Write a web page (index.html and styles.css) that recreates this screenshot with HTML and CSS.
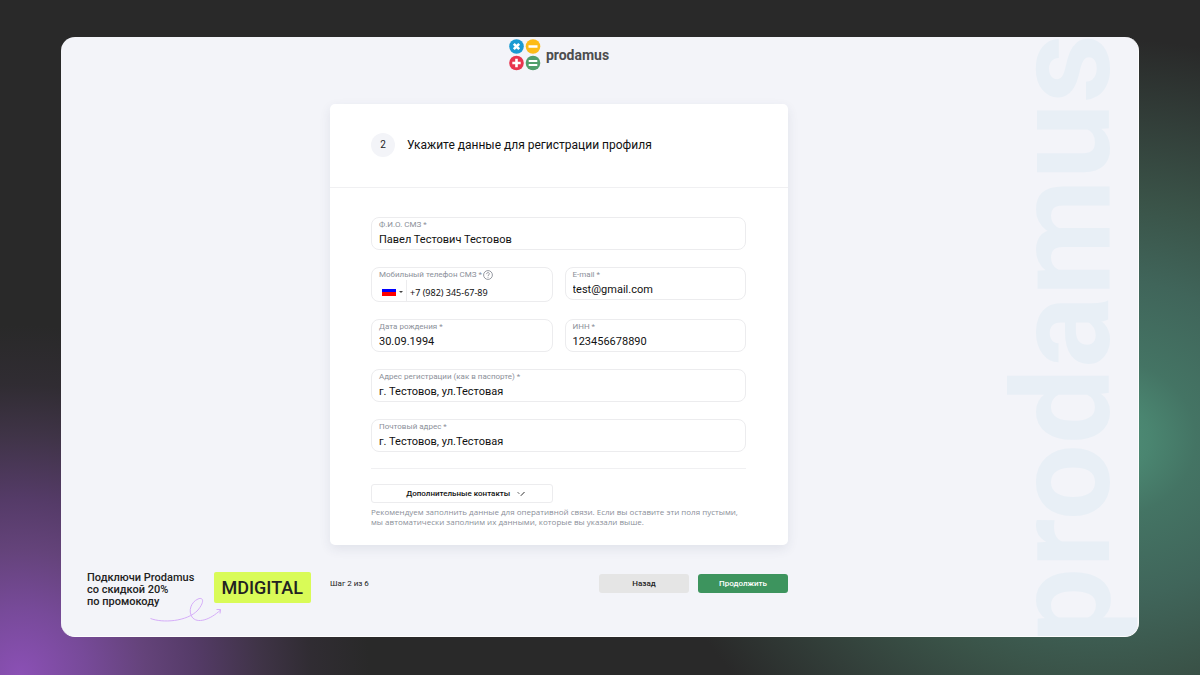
FILE: index.html
```html
<!DOCTYPE html>
<html lang="ru">
<head>
  <meta charset="UTF-8" />
  <title>Prodamus</title>
  <meta name="viewport" content="width=device-width, initial-scale=1" />
  <link rel="stylesheet" href="styles.css">
</head>
<body>
  <div class="window">
    <div class="watermark" aria-hidden="true">prodamus</div>

    <header class="logo">
      <svg class="logo-icon" viewBox="0 0 32 32" aria-hidden="true">
        <circle cx="7.5" cy="7.5" r="7.3" fill="#1b9ad2"/>
        <circle cx="24" cy="7.5" r="7.3" fill="#fdbb17"/>
        <circle cx="7.5" cy="24" r="7.3" fill="#e8344e"/>
        <circle cx="24" cy="24" r="7.3" fill="#519e6b"/>
        <g stroke="#fff" stroke-width="2.6" fill="none">
          <path d="M4.8 4.8l5.4 5.4M10.2 4.8l-5.4 5.4"/>
          <path d="M19.5 7.5h9"/>
          <path d="M7.5 19.8v8.4M3.3 24h8.4"/>
          <path d="M19.7 22h8.6M19.7 26h8.6" stroke-width="2"/>
        </g>
      </svg>
      <span class="logo-text">prodamus</span>
    </header>

    <form class="card" id="profile">
      <div class="card-head">
        <span class="step">2</span>
        <h1>Укажите данные для регистрации профиля</h1>
      </div>
      <div class="card-body">
        <div class="fields">
          <div class="field wide">
            <label for="name">Ф.И.О. СМЗ *</label>
            <input id="name" type="text" value="Павел Тестович Тестовов">
          </div>
          <div class="field phone">
            <div class="label-row">
              <label for="phone">Мобильный телефон СМЗ *</label>
              <button class="help" type="button" aria-label="Подсказка">
                <svg viewBox="0 0 10 10" fill="none" stroke="#8b8f99" stroke-width="0.9">
                  <circle cx="5" cy="5" r="4.4"/>
                  <path d="M3.6 4.1c0-2 2.8-2 2.8-.2 0 1-1.4 1-1.4 2.1M5 6.8v.9"/>
                </svg>
              </button>
            </div>
            <div class="phone-row">
              <button class="country" type="button" aria-label="Россия">
                <span class="flag"></span>
                <span class="caret"></span>
              </button>
              <input id="phone" type="tel" value="+7 (982) 345-67-89">
            </div>
          </div>
          <div class="field">
            <label for="email">E-mail *</label>
            <input id="email" type="email" value="test@gmail.com">
          </div>
          <div class="field">
            <label for="birth">Дата рождения *</label>
            <input id="birth" type="text" value="30.09.1994">
          </div>
          <div class="field">
            <label for="inn">ИНН *</label>
            <input id="inn" type="text" value="123456678890">
          </div>
          <div class="field wide">
            <label for="address">Адрес регистрации (как в паспорте) *</label>
            <input id="address" type="text" value="г. Тестовов, ул.Тестовая">
          </div>
          <div class="field wide">
            <label for="post">Почтовый адрес *</label>
            <input id="post" type="text" value="г. Тестовов, ул.Тестовая">
          </div>
        </div>
        <div class="extra">
          <button class="more" type="button">
            Дополнительные контакты
            <svg viewBox="0 0 8 6" fill="none" stroke="#333"><path d="M.5 1l2 2" stroke-width=".7"/><path d="M3.8 4.8L7.5 1"/></svg>
          </button>
          <p>Рекомендуем заполнить данные для оперативной связи. Если вы оставите эти поля пустыми,<br>мы автоматически заполним их данными, которые вы указали выше.</p>
        </div>
      </div>
    </form>

    <aside class="promo">
      <p class="promo-text">Подключи Prodamus<br>со скидкой 20%<br>по промокоду</p>
      <strong class="code">MDIGITAL</strong>
      <svg class="arrow" viewBox="0 0 72 26" fill="none" stroke="#d5adf8" stroke-width="1" aria-hidden="true">
        <path d="M.5 20.5C12 25 37 24 48 12C56 2 52-1 48 1C41 4 38 13 42 19C47 26 60 22 70.500 12"/>
        <path d="M66.500 11.500L70.500 11.500L70 15.500"/>
      </svg>
    </aside>

    <footer class="actions">
      <span class="progress">Шаг 2 из 6</span>
      <button class="btn back" type="button">Назад</button>
      <button class="btn next" type="submit" form="profile">Продолжить</button>
    </footer>
  </div>
</body>
</html>
```
FILE: styles.css
```css
* {
  box-sizing: border-box;
}
body {
  margin: 0;
  padding: 37px 61px 38px;
  min-height: 100vh;
  display: flex;
  font-family: Roboto, "Liberation Sans", sans-serif;
  color: #222;
  background:
    radial-gradient(circle 350px at 20px 100%, #8b50b5 0%, #774a99 19%, #64437a 36%, #553b68 50%, rgba(64,52,72,0.95) 69%, rgba(50,45,53,0.8) 83%, rgba(41,41,41,0) 100%),
    radial-gradient(ellipse 460px 400px at 92% 65%, #4f9078 0%, #4a8570 10%, #447464 20%, #40655a 40%, #3a5348 60%, #323e39 80%, #292929 100%);
}
button, input {
  font-family: inherit;
  color: inherit;
  margin: 0;
  padding: 0;
  border: none;
  background: none;
}
button {
  cursor: pointer;
}
.window {
  position: relative;
  flex: 1;
  display: grid;
  grid-template-columns: 269fr 458fr 350fr;
  grid-template-rows: auto auto 1fr;
  background: #f3f4f9;
  border: solid #fdfdfe;
  border-width: 0 1px 1px 0;
  border-radius: 14px;
  overflow: hidden;
}

/* vertical brand name behind the content */
.watermark {
  position: absolute;
  right: 7px;
  bottom: -8px;
  writing-mode: vertical-rl;
  transform: rotate(180deg);
  font-weight: 700;
  font-size: 135px;
  line-height: 1;
  color: #e8eff6;
  user-select: none;
}
.logo {
  grid-column: 2;
  display: flex;
  align-items: center;
  justify-content: center;
  gap: 5px;
  padding: 2px 0 33px;
}
.logo-icon {
  width: 32px;
  height: 32px;
}
.logo-text {
  font-weight: 700;
  font-size: 14px;
  line-height: 16px;
  color: #4d4d4f;
}

.card {
  grid-column: 2;
  position: relative;
  background: #fff;
  border-radius: 5px;
  box-shadow: 0 4px 12px rgba(40,50,90,0.09);
}
.card-head {
  display: flex;
  align-items: center;
  gap: 12px;
  padding: 29px 42px 30px 41px;
  border-bottom: 1px solid #f0f0f2;
}
.step {
  width: 24px;
  height: 24px;
  line-height: 24px;
  border-radius: 50%;
  background: #f3f4f8;
  text-align: center;
  font-size: 10px;
}
h1 {
  margin: 0;
  font-size: 12px;
  font-weight: 400;
  line-height: 20px;
  color: #111;
}
.card-body {
  padding: 29px 42px 18px 41px;
}
.fields {
  display: grid;
  grid-template-columns: 1fr 1fr;
  align-items: start;
  gap: 17px 12px;
  padding-bottom: 16px;
  border-bottom: 1px solid #f0f0f2;
}
.field {
  display: flex;
  flex-direction: column;
  height: 33px;
  padding: 2px 7px 0;
  border: 1px solid #ececee;
  border-radius: 8px;
}
.wide {
  grid-column: 1 / -1;
}
.field label {
  font-size: 8px;
  line-height: 10px;
  color: #8b8f99;
}
.field input {
  width: 100%;
  height: 18px;
  font-size: 11px;
  color: #111;
}
.phone {
  height: 35px;
}
.label-row, .phone-row {
  display: flex;
  align-items: center;
}
.label-row {
  height: 10px;
  gap: 1px;
}
.help {
  width: 10px;
  height: 10px;
}
.help svg {
  display: block;
}
.phone-row {
  height: 21px;
}
.country {
  display: flex;
  align-items: center;
  gap: 3px;
  height: 21px;
  padding: 2px 3px 0;
  border-right: 1px solid #ececee;
}
.flag {
  width: 14px;
  height: 9px;
  background: linear-gradient(#fff 22%, #00f 22%, #00f 61%, #f00 61%);
}
.caret {
  border: 2px solid transparent;
  border-top-color: #444;
  border-bottom: none;
}
.phone-row input {
  padding: 3px 0 0 3px;
  font-family: "Noto Sans", sans-serif;
  font-size: 9px;
}

.extra {
  padding-top: 15px;
}
.more {
  display: flex;
  align-items: center;
  justify-content: center;
  gap: 7px;
  width: calc(50% - 6px);
  height: 19px;
  padding-left: 8px;
  border: 1px solid #ececee;
  border-radius: 3px;
  font-size: 8px;
  font-weight: 500;
  color: #111;
}
.more svg {
  width: 8px;
  height: 6px;
}
.extra p {
  margin: 4px 0 0;
  font-family: "Open Sans", sans-serif;
  font-size: 8px;
  line-height: 10px;
  white-space: nowrap;
  color: #8b8f99;
}

.promo {
  grid-column: 1;
  display: flex;
  align-items: flex-start;
  justify-content: space-between;
  position: relative;
  padding: 27px 19px 0 26px;
}
.promo-text {
  margin: 0;
  font-size: 11px;
  font-weight: 500;
  line-height: 12px;
}
.code {
  padding: 0 8px;
  font-size: 18px;
  font-weight: 500;
  line-height: 31px;
  background: #d9fb57;
  border-radius: 2px;
}
.arrow {
  position: absolute;
  left: 89px;
  top: 53px;
  width: 72px;
  height: 26px;
  overflow: visible;
}
.actions {
  grid-column: 2;
  display: flex;
  align-items: center;
  align-self: start;
  gap: 9px;
  padding-top: 29px;
}
.progress {
  flex: 1;
  font-size: 8px;
}
.btn {
  width: 90px;
  height: 19px;
  border-radius: 3px;
  font-size: 8px;
  font-weight: 500;
}
.back {
  background: #e5e5e5;
}
.next {
  background: #3d945e;
  color: #fff;
}
```
